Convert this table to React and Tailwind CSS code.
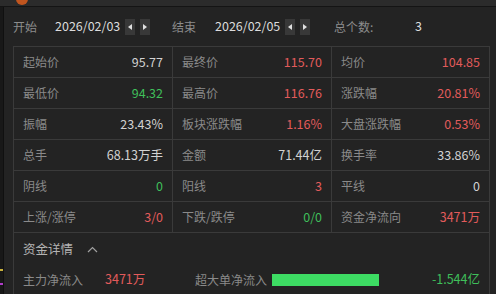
import React from "react";

const font = { fontFamily: '"Noto Sans CJK SC", "Noto Sans", sans-serif' };

const rows = [
  [["起始价", "95.77", "w"], ["最终价", "115.70", "r"], ["均价", "104.85", "r"]],
  [["最低价", "94.32", "g"], ["最高价", "116.76", "r"], ["涨跌幅", "20.81%", "r"]],
  [["振幅", "23.43%", "w"], ["板块涨跌幅", "1.16%", "r"], ["大盘涨跌幅", "0.53%", "r"]],
  [["总手", "68.13万手", "w"], ["金额", "71.44亿", "w"], ["换手率", "33.86%", "w"]],
  [["阴线", "0", "g"], ["阳线", "3", "r"], ["平线", "0", "w"]],
  [["上涨/涨停", "3/0", "r"], ["下跌/跌停", "0/0", "g"], ["资金净流向", "3471万", "r"]],
];

const colorCls = {
  w: "text-[#d2d2d2]",
  r: "text-[#e25b5b]",
  g: "text-[#3fbf5a]",
};

function Arrow({ dir }) {
  return (
    <div className="w-[10px] h-[16px] bg-[#383838] flex items-center justify-center">
      <svg width="4" height="6" viewBox="0 0 4 6">
        {dir === "l" ? (
          <path d="M4 0 L0 3 L4 6 Z" fill="#e0e0e0" />
        ) : (
          <path d="M0 0 L4 3 L0 6 Z" fill="#e0e0e0" />
        )}
      </svg>
    </div>
  );
}

export default function App() {
  return (
    <div
      className="w-[496px] h-[294px] bg-[#232323] flex flex-col overflow-hidden text-[12.5px]"
      style={font}
    >
      <div className="h-[7px] bg-[#2b2b2b] border-b border-[#141414] relative shrink-0">
        <div className="absolute left-[16px] top-[-7px] w-[12px] h-[12px] rounded-full bg-[#c0551f]" />
      </div>
      <div className="flex flex-1 min-h-0">
        <div className="w-[4px] bg-[#181818] border-r border-[#101010] relative">
          <div className="absolute left-0 top-[262px] w-[3px] h-[2px] bg-[#c9b23c]" />
          <div className="absolute left-0 top-[276px] w-[3px] h-[2px] bg-[#b03cc9]" />
        </div>
        <div className="flex-1 pl-[9px] pr-[6px] flex flex-col">
          <div className="h-[39px] flex items-center text-[#8c8c8c]">
            <span className="w-[42px] text-[12px]">开始</span>
            <span className="text-[#dcdcdc] w-[70px]">2026/02/03</span>
            <div className="flex gap-[5px]">
              <Arrow dir="l" />
              <Arrow dir="r" />
            </div>
            <span className="ml-[22px] w-[43px] text-[12px]">结束</span>
            <span className="text-[#dcdcdc] w-[70px]">2026/02/05</span>
            <div className="flex gap-[5px]">
              <Arrow dir="l" />
              <Arrow dir="r" />
            </div>
            <span className="ml-[24px] w-[81px] text-[12px]">总个数:</span>
            <span className="text-[#dcdcdc]">3</span>
          </div>
          <div className="flex-1 border-t border-l border-r border-[#3a3a3a] w-[477px]">
            <div className="grid grid-cols-[159px_159px_157px]">
              {rows.map((row, i) =>
                row.map(([label, value, c], j) => (
                  <div
                    key={i + "-" + j}
                    className={
                      "h-[31px] flex items-center justify-between px-[9px] border-b border-[#3a3a3a] " +
                      (j < 2 ? "border-r " : "")
                    }
                  >
                    <span className="text-[#8a8a8a] text-[12px]">{label}</span>
                    <span className={colorCls[c]}>{value}</span>
                  </div>
                ))
              )}
            </div>
            <div className="h-[33px] flex items-center pl-[9px] text-[#b4b4b4] text-[12.5px]">
              <span>资金详情</span>
              <svg className="ml-[14px]" width="11" height="7" viewBox="0 0 11 7">
                <path d="M1 6 L5.5 1.5 L10 6" fill="none" stroke="#a0a0a0" strokeWidth="1.2" />
              </svg>
            </div>
            <div className="h-[27px] flex items-center pl-[9px] pr-[9px]">
              <span className="text-[#8a8a8a] w-[82px] text-[12px]">主力净流入</span>
              <span className="text-[#e25b5b] w-[90px]">3471万</span>
              <span className="text-[#8a8a8a] w-[77px] text-[12px]">超大单净流入</span>
              <div className="w-[107px] h-[12px] bg-[#3ddc63]" />
              <span className="ml-auto text-[#3fbf5a]">-1.544亿</span>
            </div>
          </div>
        </div>
      </div>
    </div>
  );
}
